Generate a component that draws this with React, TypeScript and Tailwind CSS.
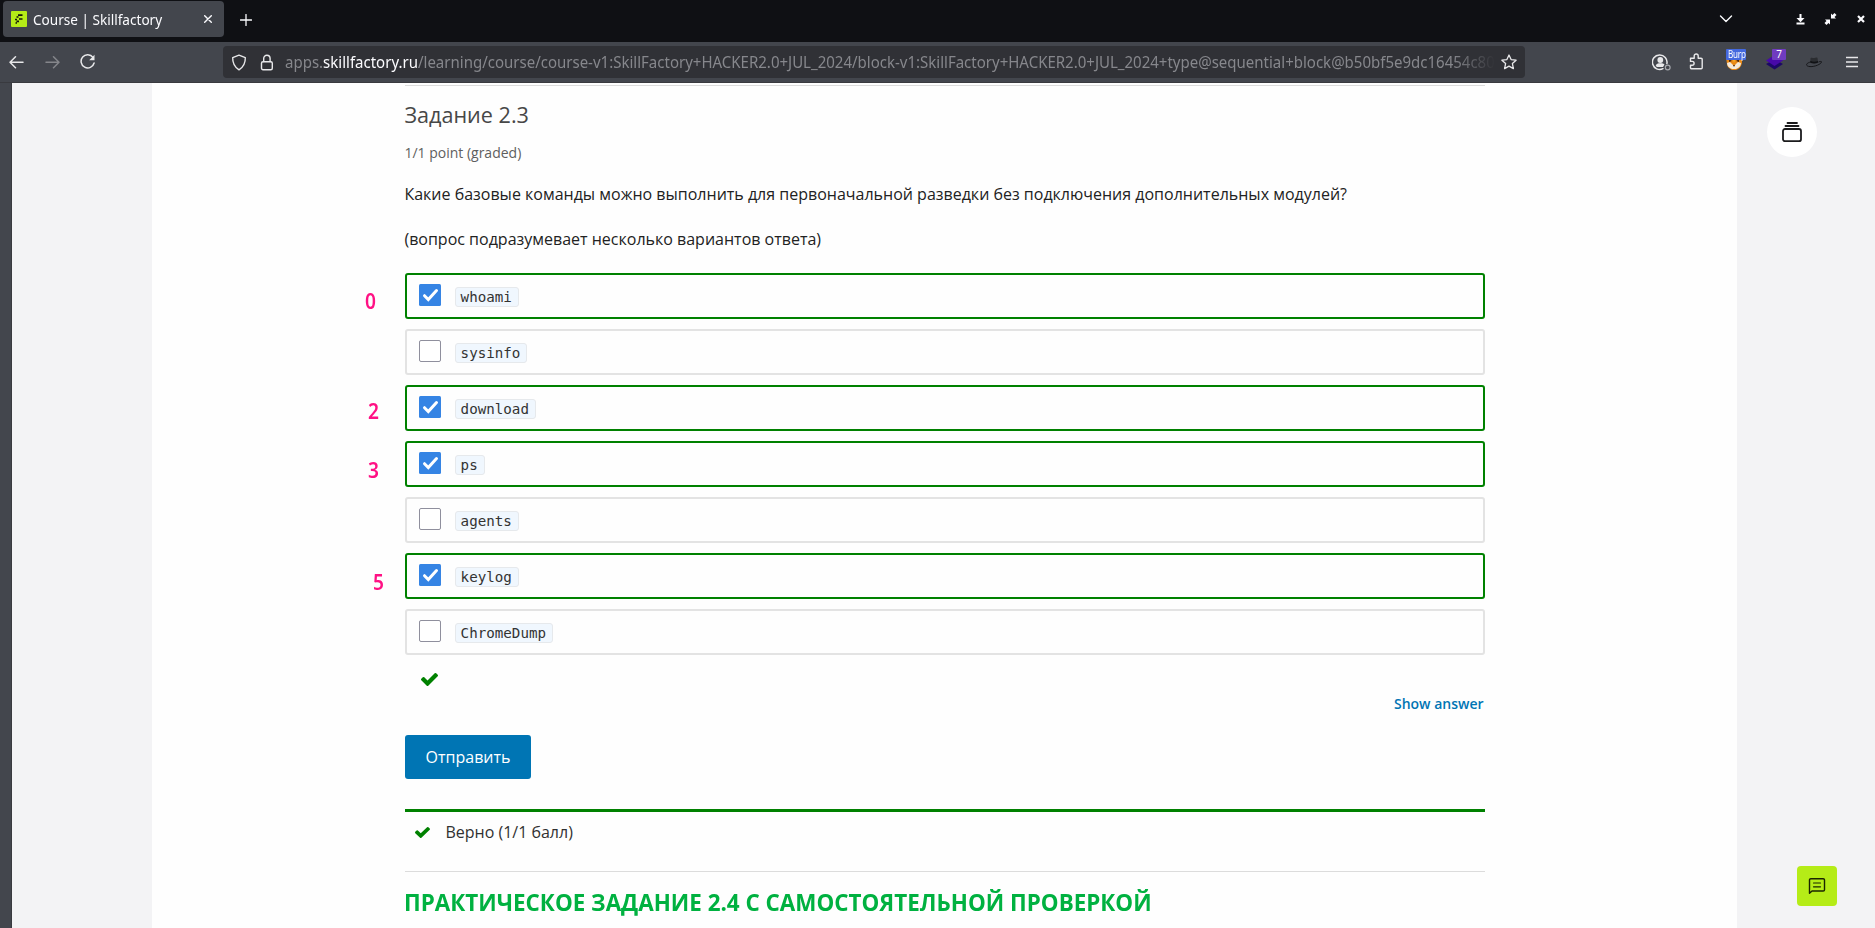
import React from "react";

const options = [
  { label: "whoami", checked: true },
  { label: "sysinfo", checked: false },
  { label: "download", checked: true },
  { label: "ps", checked: true },
  { label: "agents", checked: false },
  { label: "keylog", checked: true },
  { label: "ChromeDump", checked: false },
];

const notes = [
  { text: "0", place: "left-[365px] top-[283px]" },
  { text: "2", place: "left-[368px] top-[393px]" },
  { text: "3", place: "left-[368px] top-[452px]" },
  { text: "5", place: "left-[373px] top-[564px]" },
];

const stroke = { fill: "none", stroke: "currentColor", strokeLinecap: "round", strokeLinejoin: "round" } as const;

function FaCheck({ className }: { className: string }) {
  return (
    <svg viewBox="121 334 1550 1188" preserveAspectRatio="none" className={className}>
      <path fill="#008100" d="M1671 566q0 40-28 68l-724 724-136 136q-28 28-68 28t-68-28l-136-136-362-362q-28-28-28-68t28-68l136-136q28-28 68-28t68 28l294 295 656-657q28-28 68-28t68 28l136 136q28 28 28 68z" />
    </svg>
  );
}

function TabBar() {
  return (
    <header className="flex h-[42px] items-start bg-[#0f1014] text-[#fbfbfe]">
      <div className="ml-[3px] mt-px flex h-9 w-[221px] items-center rounded-[4px] bg-[#43464d] pl-2">
        <svg width="16" height="16" viewBox="0 0 16 16" className="shrink-0">
          <rect width="16" height="16" rx="1" fill="#b5ec17" />
          <path d="M7 4.200h4.500M5.500 6h2M8 8h3.500M4 8.500h2M5.500 10.300h2.500M4.500 12h1.500" stroke="#15180a" strokeWidth="1.700" />
        </svg>
        <span className="ml-[6px] w-[130px] origin-left scale-x-[0.905] whitespace-nowrap text-[15px]">Course | Skillfactory</span>
        <svg width="8" height="8" viewBox="0 0 8 8" className="ml-auto mr-[12px]">
          <path d="M.7.7l6.600 6.600M7.300.7L.7 7.300" {...stroke} strokeWidth="1.400" />
        </svg>
      </div>
      <svg width="12" height="12" viewBox="0 0 12 12" className="ml-4 mt-[14px]">
        <path d="M6 .5v11M.5 6h11" {...stroke} strokeWidth="1.300" />
      </svg>
      <svg width="14" height="8" viewBox="0 0 14 8" className="ml-auto mr-[63px] mt-[15px]">
        <path d="M1.500 1L7 6.500 12.500 1" {...stroke} strokeWidth="1.400" />
      </svg>
      <svg width="9" height="11" viewBox="0 0 9 11" className="mr-[19px] mt-[14px]">
        <path d="M4.500 0v6M.5 9.500h8" stroke="currentColor" strokeWidth="2" />
        <path d="M.5 4h8l-4 4.300z" fill="currentColor" />
      </svg>
      <svg width="13" height="12" viewBox="0 0 13 12" className="mr-[20px] mt-[13px]">
        <path d="M7 5.500V.5l1.500 1.500L10.500 0 12.500 2l-2 2 1.500 1.500zM6 6.500v5L4.500 10l-2 2L.5 10l2-2L1 6.500z" fill="currentColor" />
      </svg>
      <svg width="8" height="8" viewBox="0 0 8 8" className="mr-[10px] mt-[15px]">
        <path d="M1 1l6 6M7 1L1 7" stroke="currentColor" strokeWidth="2.200" />
      </svg>
    </header>
  );
}

function Toolbar() {
  return (
    <div className="flex h-[41px] items-start border-b border-[#393a3f] bg-[#43464d] text-[#e8e8ea]">
      <div className="flex w-[223px] items-center pt-[12px]">
        <svg width="15" height="16" viewBox="0 0 15 16" className="ml-[8.500px]">
          <path d="M14 8.200H1M6.500 2.700L1 8.200l5.500 5.500" {...stroke} strokeWidth="1.500" />
        </svg>
        <svg width="15" height="16" viewBox="0 0 15 16" className="ml-[21px] text-[#85868b]">
          <path d="M1 8.200h13M8.500 2.700L14 8.200l-5.500 5.500" {...stroke} strokeWidth="1.500" />
        </svg>
        <svg width="16" height="16" viewBox="0 0 16 16" className="ml-[20.500px]">
          <path d="M13 3.400A6.600 6.600 0 1 0 14.100 9" {...stroke} strokeWidth="1.500" />
          <path d="M14.500.8v5.400H9.200z" fill="currentColor" />
        </svg>
      </div>
      <div className="mt-1 flex h-8 w-[1302px] items-center rounded-[4px] bg-[#303136] pl-2">
        <svg width="16" height="17" viewBox="0 0 16 17" className="shrink-0">
          <path d="M8 1.200l6.300 2.400c.2 5-1.200 9-6.300 12.200C2.900 12.600 1.500 8.600 1.700 3.600z" {...stroke} strokeWidth="1.400" />
        </svg>
        <svg width="14" height="17" viewBox="0 0 14 17" className="ml-[13px] shrink-0">
          <rect x="1.500" y="7.700" width="10.800" height="8" rx="1.500" {...stroke} strokeWidth="1.400" />
          <path d="M3.700 7.500V4.400a3.200 3.200 0 0 1 6.400 0v3.100" {...stroke} strokeWidth="1.400" />
        </svg>
        <div className="ml-[11px] w-[1210px] whitespace-nowrap text-[16px] text-[#86878c] [mask-image:linear-gradient(to_right,black_96.500%,transparent)]">
          <span className="inline-block origin-left scale-x-[0.938]">
            apps.<span className="text-[#fbfbfe]">skillfactory.ru</span>/learning/course/course-v1:SkillFactory+HACKER2.0+JUL_2024/block-v1:SkillFactory+HACKER2.0+JUL_2024+type@sequential+block@b50bf5e9dc16454c80
          </span>
        </div>
        <svg width="16" height="16" viewBox="0 0 16 16" className="ml-auto mr-2 shrink-0">
          <path d="M8 1l2.100 4.600 5 .6-3.700 3.400 1 5L8 12.100l-4.400 2.500 1-5L.9 6.200l5-.6z" {...stroke} strokeWidth="1.300" />
        </svg>
      </div>
      <div className="ml-[127px] mt-[11px] h-[18px] w-[19px]">
        <svg width="19" height="18" viewBox="0 0 19 18">
          <path d="M14.900 10.500A7.300 7.300 0 1 0 11 15.700" {...stroke} strokeWidth="1.500" />
          <circle cx="8.300" cy="7" r="2.900" fill="currentColor" />
          <path d="M3.700 12.700c.5-2 2.300-2.400 4.600-2.400s3.500.4 4.200 1.200l-1.500 2.600H5z" fill="currentColor" />
          <circle cx="15.700" cy="14.500" r="2.400" fill="none" stroke="#a6a8ad" strokeWidth="1.200" />
        </svg>
      </div>
      <svg width="15" height="17" viewBox="0 0 15 17" className="ml-[18px] mt-[11px]">
        <path d="M1.500 5.200h3.700V3a2 2 0 0 1 4 0v2.200H12a1.200 1.200 0 0 1 1.200 1.200v8.400a1 1 0 0 1-1 1H2.500a1 1 0 0 1-1-1v-2.600h1.700a1.900 1.900 0 0 0 0-3.800H1.500z" {...stroke} strokeWidth="1.400" />
      </svg>
      <div className="relative ml-[22px] mt-[7px] h-[22px] w-[20px]">
        <svg width="16" height="14" viewBox="0 0 16 14" className="absolute left-0 top-[7px]">
          <path d="M0 1l4 1h8l4-1v6c-1 4-3 6-6 7H6C3 12 1 11 1 8z" fill="#e98916" />
          <path d="M1 7l3-1 4 4 4-4 3 1c0 3-2 5-5 6H6C3 12 1 10 1 7z" fill="#f5eadb" />
          <path d="M3 3l3 2-3 1zM13 3l-3 2 3 1zM7 9h2l-1 2z" fill="#4b2610" />
          <path d="M6 2h4L8 7z" fill="#f9ab26" />
        </svg>
        <span className="absolute left-0 top-0 h-[11px] w-[20px] rounded-[1px] bg-[#4469df] pl-[2px] text-[10px] leading-[11px] text-white">
          <span className="block w-[22px] origin-left scale-x-[0.8] tracking-[-0.2px]">Burp</span>
        </span>
      </div>
      <div className="relative ml-[20px] mt-[7px] h-[22px] w-[20px]">
        <svg width="17" height="16" viewBox="0 0 17 16" className="absolute left-0 top-[5px]">
          <path d="M8.500 5.500L17 10l-8.500 5.500L0 10z" fill="#1c0768" />
          <path d="M8.500 1L17 6.500 8.500 12 0 6.500z" fill="#4709a8" />
        </svg>
        <span className="absolute left-[6px] top-0 h-[11px] w-[14px] rounded-[1px] bg-[#703cc0] text-center text-[10px] leading-[11px] text-white">7</span>
      </div>
      <svg width="16" height="11" viewBox="0 0 16 11" className="ml-[20px] mt-[15px]">
        <path d="M4.500 1.200C6 .2 7 1.300 8.200 1 9.500.6 11 .3 11.500 1l.6 4.200c-2 1.300-5 1.500-7.700.4z" fill="#2b2d31" />
        <path d="M4.300 3.800c2 1.200 5.500 1.200 7.700.2l.2 1.600c-2 1.200-5.500 1.300-8 .2z" fill="#111215" />
        <path d="M3.800 5.200C-.6 6.500-.4 9.300 4 9.600 9 9.800 15 7.200 15.500 5 15.800 4.300 14 4.300 12.700 4.900" fill="none" stroke="#17181b" strokeWidth="1" />
      </svg>
      <svg width="12" height="12" viewBox="0 0 12 12" className="ml-[24px] mt-[14px]">
        <path d="M0 1.500h12M0 6h12M0 10.500h12" stroke="currentColor" strokeWidth="1.300" />
      </svg>
    </div>
  );
}

function Option({ label, checked }: { label: string; checked: boolean }) {
  return (
    <label className={`flex h-[46px] items-start rounded-[3px] border-2 pl-3 ${checked ? "border-[#008100]" : "border-[#e3e3e3]"}`}>
      {checked ? (
        <svg width="22" height="22" viewBox="0 0 22 22" className="mt-[9px]">
          <rect width="22" height="22" rx="1.500" fill="#3584e4" />
          <path d="M5.500 11.700l3.800 3.800 8.200-9" fill="none" stroke="#fff" strokeWidth="3" strokeLinecap="round" />
        </svg>
      ) : (
        <span className="mt-[9px] h-[22px] w-[22px] rounded-[2px] border border-[#8f8f9d] bg-white" />
      )}
      <code className="ml-[14px] mt-[12px] h-5 rounded-[3px] border border-[#e6e9ec] bg-[#f0f7fe] pl-[4.600px] pr-[6px] font-['DejaVu_Sans_Mono',monospace] text-[14.200px] leading-[18px] text-[#333]">
        {label}
      </code>
    </label>
  );
}

export default function App() {
  return (
    <div className="relative flex h-[928px] w-[1875px] flex-col overflow-hidden bg-[#43464d] font-['Noto_Sans',sans-serif]">
      <TabBar />
      <Toolbar />
      <div className="flex min-h-0 flex-1 bg-[#f3f3f5] font-['Open_Sans',sans-serif]">
        <div className="w-3 shrink-0 border-r border-[#393a3f] bg-[#43464d]" />
        <div className="w-[140px] shrink-0" />
        <main className="w-[1585px] shrink-0 overflow-hidden bg-[#fefefe] pl-[253px]">
          <section className="flex w-[1080px] flex-col">
            <div className="mt-[2px] h-px shrink-0 bg-[#dcdcdc]" />
            <h3 className="-ml-[0.600px] mt-[13px] h-8 self-start text-[21.600px] leading-8 text-[#474747]">Задание 2.3</h3>
            <div className="-ml-[0.600px] mt-[12px] h-5 self-start text-[14px] leading-5 text-[#5e5e5e]">1/1 point (graded)</div>
            <p className="-ml-[0.600px] mt-[19px] h-6 self-start text-[16px] leading-6 text-[#222]">
              Какие базовые команды можно выполнить для первоначальной разведки без подключения дополнительных модулей?
            </p>
            <p className="-ml-[0.600px] mt-[21px] h-6 self-start text-[16px] leading-6 text-[#222]">(вопрос подразумевает несколько вариантов ответа)</p>
            <div className="mt-[22px] flex flex-col gap-[10px]">
              {options.map((o) => (
                <Option key={o.label} label={o.label} checked={o.checked} />
              ))}
            </div>
            <FaCheck className="ml-[15.500px] mt-[18px] h-[13px] w-[17px]" />
            <button className="mr-[1.500px] mt-[8px] h-5 self-end text-[14px] font-semibold leading-5 text-[#0075b4]">Show answer</button>
            <button className="mt-[21px] h-11 w-[126px] rounded-[3px] bg-[#0075b4] text-[16px] leading-[44px] text-white">Отправить</button>
            <div className="mt-[30px] flex h-[62px] items-start border-t-3 border-[#008100] pl-[10px]">
              <FaCheck className="mt-[15px] h-[11px] w-[15px]" />
              <span className="ml-[15.400px] mt-[8px] text-[16px] leading-6 text-[#313131]">Верно (1/1 балл)</span>
            </div>
            <div className="h-px bg-[#dcdcdc]" />
            <h2 className="-ml-[0.600px] mt-[14px] origin-left scale-x-[0.958] self-start whitespace-nowrap text-[23.400px] font-bold leading-8 text-[#00b140]">ПРАКТИЧЕСКОЕ ЗАДАНИЕ 2.4 С САМОСТОЯТЕЛЬНОЙ ПРОВЕРКОЙ</h2>
          </section>
        </main>
        <aside className="flex flex-1 flex-col justify-between">
          <button className="ml-[30px] mt-6 flex h-[50px] w-[50px] items-center justify-center rounded-full bg-white text-[#1b1b1d]">
            <svg width="22" height="22" viewBox="0 0 22 22">
              <rect x="2" y="8" width="18" height="12.200" rx="2" {...stroke} strokeWidth="1.800" />
              <path d="M4.500 5h13M6.500 2h9.500" {...stroke} strokeWidth="1.800" />
            </svg>
          </button>
          <button className="mb-[22px] ml-[58px] flex h-10 w-10 translate-x-[2px] items-center justify-center rounded-[4px] bg-[#b5ec17] text-[#1a2400]">
            <svg width="18" height="18" viewBox="0 0 18 18">
              <path d="M1.500 16.300V3a1.300 1.300 0 0 1 1.300-1.300h12.400A1.300 1.300 0 0 1 16.500 3v9.700a1.300 1.300 0 0 1-1.300 1.300H4z" {...stroke} strokeWidth="1.400" />
              <path d="M5.500 6h7M5.500 9.800h7" {...stroke} strokeWidth="1.200" />
            </svg>
          </button>
        </aside>
      </div>
      {notes.map((n) => (
        <span key={n.text} className={`absolute origin-left scale-x-[0.92] text-[20.800px] font-semibold leading-9 text-[#ff1184] ${n.place}`}>
          {n.text}
        </span>
      ))}
    </div>
  );
}
